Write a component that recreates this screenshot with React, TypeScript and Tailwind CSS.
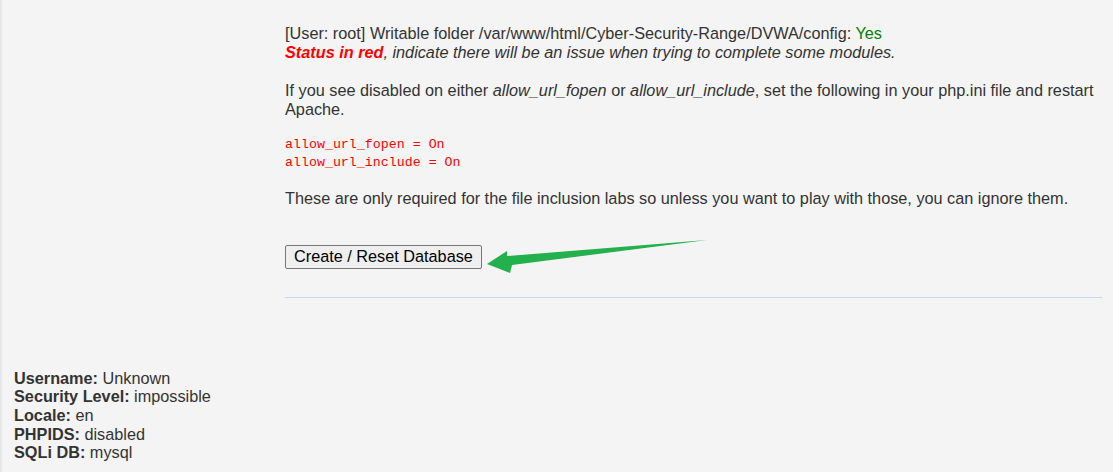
export default function App() {
  return (
    <div className="min-h-[472px] bg-[#f4f4f4] border-l-2 border-[#e8e8e8] text-[16.25px] leading-[18.7px] text-[#333] font-['Liberation_Sans',Arial,sans-serif] overflow-hidden">
      <div className="flex">
        {/* left menu column (empty in this view) */}
        <div className="w-[283px] shrink-0" />

        <div className="w-[817px] pt-[24px]">
          <p>
            [User: root] Writable folder /var/www/html/Cyber-Security-Range/DVWA/config:{' '}
            <span className="text-[#008000]">Yes</span>
            <br />
            <span className="text-[#ff0000] font-bold italic">Status in red</span>
            <i>, indicate there will be an issue when trying to complete some modules.</i>
          </p>

          <p className="mt-[20px]">
            If you see disabled on either <i>allow_url_fopen</i> or <i>allow_url_include</i>, set the following in your php.ini file and restart Apache.
          </p>

          <pre className="mt-[17px] text-[#ff0000] text-[13.3px] leading-[18px] font-['Liberation_Mono','Courier_New',monospace]">
            allow_url_fopen = On{'\n'}allow_url_include = On
          </pre>

          <p className="mt-[17px]">
            These are only required for the file inclusion labs so unless you want to play with those, you can ignore them.
          </p>

          <div className="relative mt-[37px] h-[24px]">
            <button className="h-[24px] px-[8px] bg-[#efefef] border border-[#767676] rounded-[2px] text-black text-[16.25px] leading-none">
              Create / Reset Database
            </button>
            <svg
              className="absolute left-[195px] top-[-10px]"
              width="230"
              height="40"
              viewBox="0 0 230 40"
            >
              <polygon
                points="7,29 27,16 27,21 227,5 32,30 30,38"
                fill="#22b14c"
              />
            </svg>
          </div>

          <div className="mt-[28px] h-px bg-[#c2d8ff]" />
        </div>
      </div>

      <div className="mt-[71px] pl-[12px] pb-[10px]">
        <div><b>Username:</b> Unknown</div>
        <div><b>Security Level:</b> impossible</div>
        <div><b>Locale:</b> en</div>
        <div><b>PHPIDS:</b> disabled</div>
        <div><b>SQLi DB:</b> mysql</div>
      </div>
    </div>
  );
}
